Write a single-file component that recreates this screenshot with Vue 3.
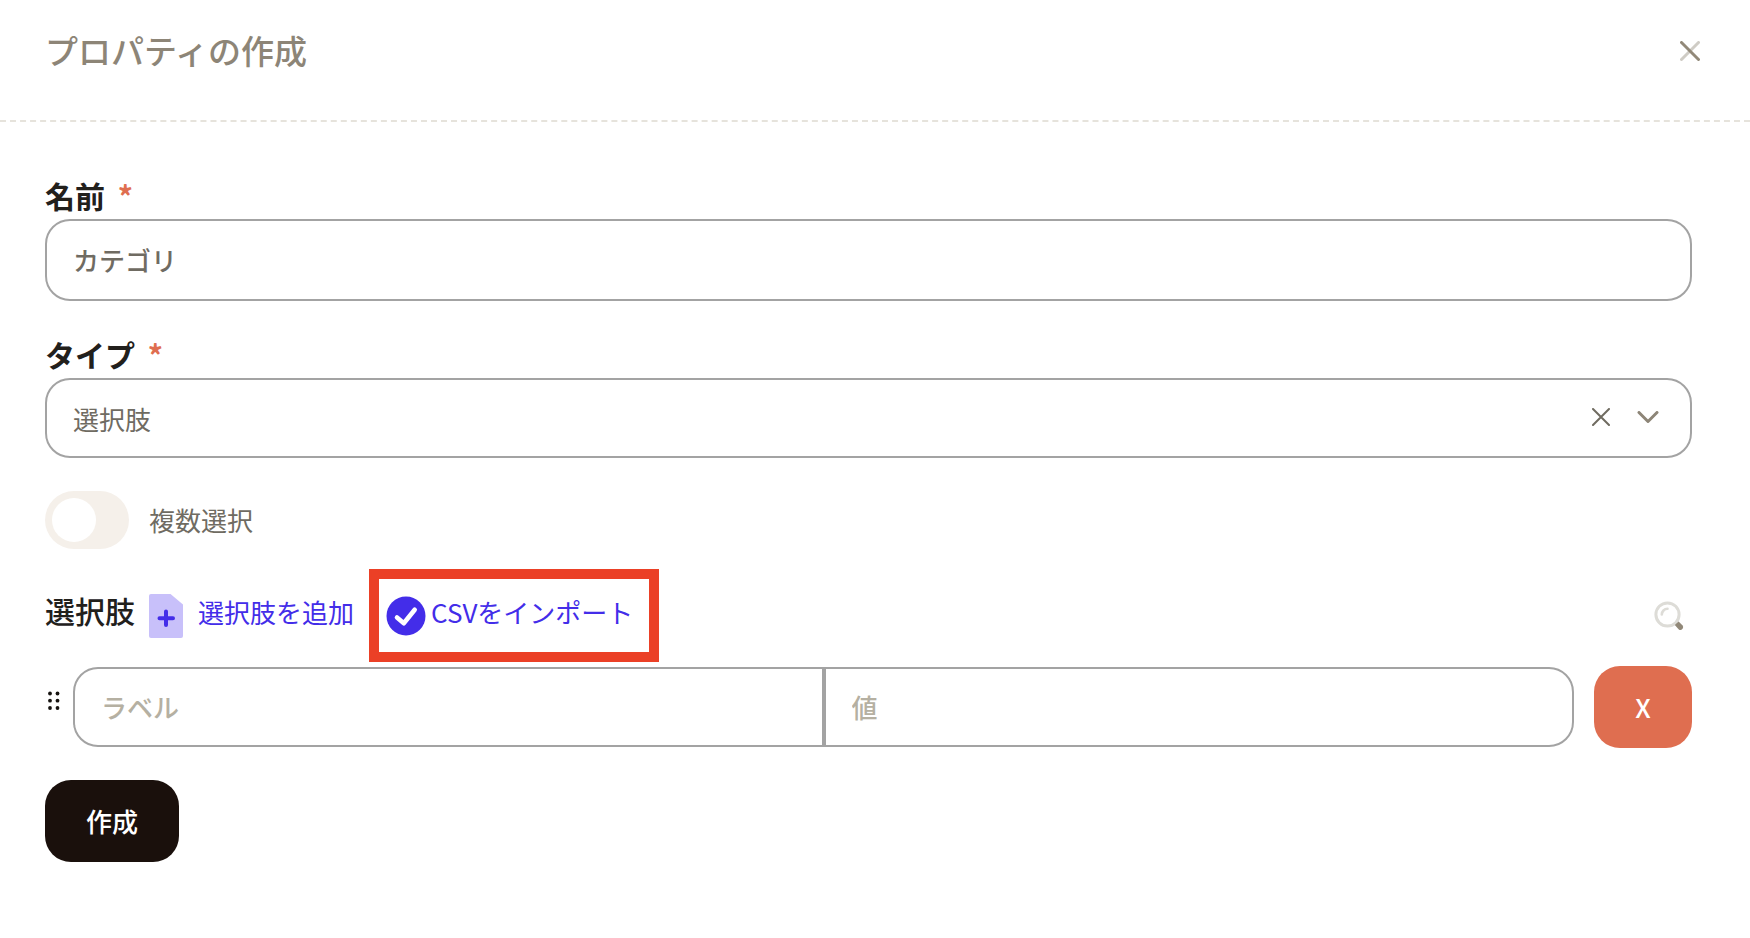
<script setup>
import { ref } from 'vue'

const name = ref('カテゴリ')
const type = ref('select')
const multiple = ref(false)
const options = ref([{ id: 1, label: '', value: '' }])
let nextId = 2

function addOption() {
  options.value.push({ id: nextId++, label: '', value: '' })
}
function removeOption(id) {
  options.value = options.value.filter((o) => o.id !== id)
}
</script>

<template>
  <main class="dialog">
    <header class="header">
      <h1 class="title">プロパティの作成</h1>
      <button class="icon-button close" type="button" aria-label="閉じる">
        <svg width="20" height="20" viewBox="0 0 20 20" fill="none" stroke-width="3" stroke-linecap="round">
          <path d="M18.5 1.5 1.5 18.5" stroke="#cfccc5" />
          <path d="M1.5 1.5 18.5 18.5" stroke="#928979" />
        </svg>
      </button>
    </header>

    <form class="form" @submit.prevent>
      <div class="field">
        <label class="label" for="name">名前 <span class="required">*</span></label>
        <input id="name" v-model="name" class="control tall" type="text" required />
      </div>

      <div class="field">
        <label class="label" for="type">タイプ <span class="required">*</span></label>
        <div class="select-wrap">
          <select id="type" v-model="type" class="control select">
            <option value="select">選択肢</option>
          </select>
          <div class="select-icons">
            <button class="icon-button" type="button" aria-label="クリア">
              <svg width="18" height="18" viewBox="0 0 18 18" fill="none" stroke="#6f6b60" stroke-width="2" stroke-linecap="round">
                <path d="M1 1 17 17M17 1 1 17" />
              </svg>
            </button>
            <svg class="chevron" width="22" height="12" viewBox="0 0 22 12" fill="none" stroke="#8d8577" stroke-width="3" stroke-linecap="round" stroke-linejoin="round">
              <path d="M2 1.5 11 10.5 20 1.5" />
            </svg>
          </div>
        </div>
      </div>

      <label class="switch">
        <input v-model="multiple" type="checkbox" />
        <span>複数選択</span>
      </label>

      <section class="options">
        <div class="toolbar">
          <h2 class="heading">選択肢</h2>
          <button class="action add" type="button" @click="addOption">
            <svg width="34" height="44" viewBox="0 0 34 44">
              <path d="M2 0H21.5L34 10.5V42a2 2 0 0 1-2 2H2a2 2 0 0 1-2-2V2a2 2 0 0 1 2-2Z" fill="#c8c0fa" />
              <path d="M17 17.5V31M10.5 24.3H24" stroke="#432de9" stroke-width="4" stroke-linecap="round" />
            </svg>
            <span>選択肢を追加</span>
          </button>
          <div class="highlight">
            <button class="action import" type="button">
              <svg width="40" height="40" viewBox="0 0 40 40">
                <circle cx="20" cy="20" r="19.5" fill="#432de9" />
                <path d="M11 21.5 17.8 27.2 28.7 13.8" fill="none" stroke="#fff" stroke-width="4.6" stroke-linecap="round" stroke-linejoin="round" />
              </svg>
              <span>CSVをインポート</span>
            </button>
          </div>
          <button class="icon-button search" type="button" aria-label="検索">
            <svg width="30" height="30" viewBox="0 0 30 30" fill="none">
              <circle cx="13.5" cy="13.5" r="11.6" stroke="#dddcd7" stroke-width="3" />
              <path d="M7.8 13.5a5.7 5.7 0 0 1 5.7-5.7" stroke="#dddcd7" stroke-width="2.6" stroke-linecap="round" />
              <path d="M20.8 24 24.6 20.6 28.6 24.4Q29.8 25.8 28.6 27.8 26.6 30 24.8 28.4Z" fill="#918878" />
            </svg>
          </button>
        </div>

        <div v-for="option in options" :key="option.id" class="option-row">
          <button class="icon-button handle" type="button" aria-label="並べ替え">
            <svg width="12" height="20" viewBox="0 0 12 20" fill="#161310">
              <circle cx="2" cy="2.5" r="1.9" /><circle cx="9.5" cy="2.5" r="1.9" />
              <circle cx="2" cy="9.7" r="1.9" /><circle cx="9.5" cy="9.7" r="1.9" />
              <circle cx="2" cy="17" r="1.9" /><circle cx="9.5" cy="17" r="1.9" />
            </svg>
          </button>
          <div class="pair">
            <input v-model="option.label" class="control first" type="text" placeholder="ラベル" aria-label="ラベル" />
            <input v-model="option.value" class="control last" type="text" placeholder="値" aria-label="値" />
          </div>
          <button class="button remove" type="button" @click="removeOption(option.id)">X</button>
        </div>
      </section>

      <button class="button submit" type="submit">作成</button>
    </form>
  </main>
</template>

<style>
body {
  background: #fff;
}
</style>

<style scoped>
.dialog {
  font-family: 'Noto Sans CJK JP', 'Noto Sans', sans-serif;
  font-size: 26px;
  line-height: 40px;
  color: #6f6b62;
}
.dialog *,
.dialog *::before {
  box-sizing: border-box;
}
button,
input,
select {
  font: inherit;
  color: inherit;
  margin: 0;
}
button {
  border: 0;
  padding: 0;
  background: none;
  cursor: pointer;
}
svg {
  display: block;
  flex: none;
}
.icon-button {
  display: flex;
}
.header {
  display: flex;
  align-items: center;
  justify-content: space-between;
  height: 122px;
  padding: 0 50px 20px 45px;
  border-bottom: 2px dashed #e6e3dc;
}
.close {
  margin-top: 2px;
}
.title {
  margin: 0;
  font-size: 33px;
  font-weight: 500;
  color: #8d8577;
}
.form {
  padding: 51px 58px 40px 45px;
}
.field {
  margin-bottom: 31px;
}
.label {
  display: block;
  padding-bottom: 2px;
  line-height: 44px;
  font-size: 30px;
  font-weight: 700;
  color: #22201c;
}
.required {
  margin-left: 6px;
  color: #df6e50;
}
.control {
  display: block;
  width: 100%;
  height: 80px;
  padding: 0 26px 2px;
  border: 2px solid #a3a3a3;
  border-radius: 25px;
  background: #fff;
  outline: none;
  appearance: none;
}
.tall {
  height: 82px;
  font-weight: 500;
}
.select {
  padding: 2px 26px 0;
}
.control::placeholder {
  color: #b5b0a2;
  font-weight: 500;
  opacity: 1;
}
.select-wrap {
  position: relative;
}
.select-icons {
  position: absolute;
  top: 0;
  right: 33px;
  bottom: 0;
  display: flex;
  align-items: center;
  gap: 27px;
  padding-bottom: 2px;
  pointer-events: none;
}
.select-icons button {
  pointer-events: auto;
}
.switch {
  display: flex;
  align-items: center;
  gap: 20px;
  width: fit-content;
  padding-top: 2px;
}
.switch input {
  display: flex;
  align-items: center;
  width: 84px;
  height: 58px;
  padding: 7px;
  border-radius: 29px;
  background: #f5f0ea;
  appearance: none;
}
.switch input::before {
  content: '';
  width: 44px;
  height: 44px;
  border-radius: 50%;
  background: #fff;
}
.switch input:checked {
  justify-content: flex-end;
  background: #432de9;
}
.options {
  margin: 20px 0 32px;
}
.toolbar {
  display: flex;
  align-items: center;
  margin-bottom: 4px;
}
.heading {
  margin: 0 14px 12px 0;
  font-size: 30px;
  font-weight: 500;
  color: #22201c;
}
.action {
  display: flex;
  align-items: center;
  color: #432de9;
}
.action span {
  margin-bottom: 8px;
  line-height: 32px;
}
.add {
  gap: 15px;
}
.highlight {
  margin-left: 15px;
  padding: 17px 16px 16px 7px;
  border: 10px solid #eb4026;
}
.import {
  gap: 5px;
}
.search {
  margin-left: auto;
  margin-right: 8px;
}
.option-row {
  display: flex;
  align-items: center;
}
.option-row + .option-row {
  margin-top: 12px;
}
.handle {
  width: 28px;
  padding: 0 0 12px 3px;
}
.pair {
  display: flex;
  flex: 1;
}
.first {
  border-radius: 25px 0 0 25px;
}
.last {
  border-radius: 0 25px 25px 0;
}
.button {
  height: 82px;
  border-radius: 26px;
  color: #fff;
  font-weight: 500;
}
.remove {
  width: 98px;
  margin-left: 20px;
  background: #df6e50;
}
.submit {
  padding: 0 41px;
  background: #1a100c;
}
</style>
